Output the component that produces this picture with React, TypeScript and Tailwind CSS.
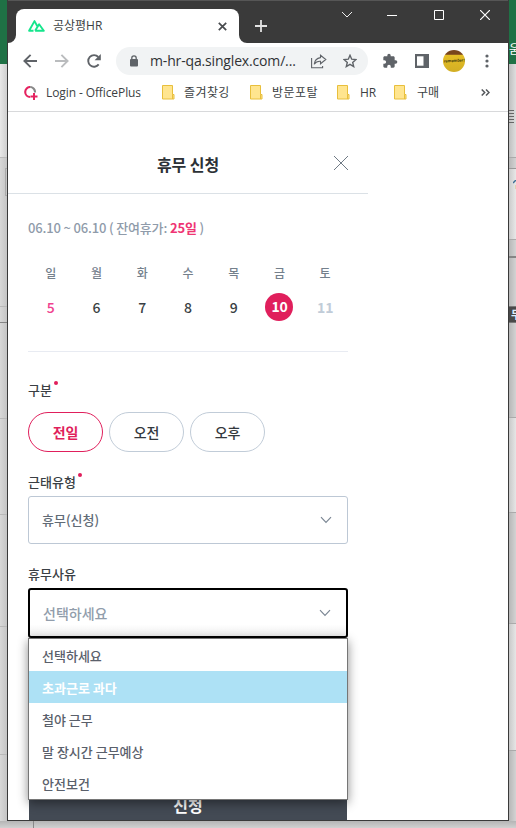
import React from 'react';

const BODY = "font-['Noto_Sans_CJK_KR',sans-serif]";
const UI = "font-['Open_Sans','Noto_Sans_CJK_KR',sans-serif]";

function Folder() {
  return (
    <svg width="13" height="15" viewBox="0 0 13 15" className="shrink-0">
      <path d="M.5.5h10v9h1.5v4.5H.5z" fill="#ffe58f" stroke="#e8bf3c" />
      <path d="M10.5 9.5V14" stroke="#e8bf3c" fill="none" />
    </svg>
  );
}

function Chevron() {
  return (
    <svg width="12" height="8" viewBox="0 0 12 8" fill="none" stroke="#7b8794" strokeWidth="1.2">
      <path d="M1 1.2 6 6.3 11 1.2" />
    </svg>
  );
}

function TitleBar() {
  return (
    <div className="flex h-[43px] border-t border-[#565656] bg-[#3a3a3a] text-white">
      <div className="flex w-2 items-end">
        <svg width="8" height="8"><path d="M8 0v8H0A8 8 0 0 0 8 0" fill="#fff" /></svg>
      </div>
      <div className="mt-2 flex h-[34px] w-[223px] items-center rounded-t-lg bg-white pl-3">
        <svg width="17" height="12" viewBox="0 0 17 12" fill="none" stroke="#15e58c" strokeWidth="1.9" strokeLinejoin="round">
          <path d="M5.5 10.8H1.1L6.5 1.1 10 7.5M7.1 10.8 11.1 4.2 15.8 10.8H7.1" />
        </svg>
        <span className={`${UI} ml-2 w-[160px] whitespace-nowrap text-[12px] leading-[18px] text-[#3c3f43]`}>공상평HR</span>
        <svg className="ml-[5px]" width="9" height="9" viewBox="0 0 9 9" stroke="#484b4e" strokeWidth="1.7"><path d="m.8.8 7.4 7.4m0-7.4L.8 8.2" /></svg>
      </div>
      <div className="flex w-2 items-end">
        <svg width="8" height="8"><path d="M0 0v8h8A8 8 0 0 1 0 0" fill="#fff" /></svg>
      </div>
      <svg className="ml-2 mt-[19px]" width="12" height="12" stroke="#e2e2e2" strokeWidth="1.8"><path d="M6 0v12M0 6h12" /></svg>
      <svg className="ml-[74px] mt-[10px]" width="12" height="8" fill="none" stroke="#eee"><path d="m1 1 5 5 5-5" /></svg>
      <svg className="ml-[34px] mt-[14px]" width="10" height="1"><path d="M0 .5h10" stroke="#fff" /></svg>
      <svg className="ml-[37px] mt-[9px]" width="10" height="10"><path d="M.5.5h9v9h-9z" stroke="#fff" fill="none" /></svg>
      <svg className="ml-9 mt-[9px]" width="10" height="10" stroke="#fff" strokeWidth="1.2"><path d="m0 0 10 10M10 0 0 10" /></svg>
    </div>
  );
}

function Toolbar() {
  return (
    <div className="flex h-9 items-center pl-[15px]">
      <svg width="14" height="14" viewBox="0 0 14 14" fill="none" stroke="#5f6368" strokeWidth="1.9"><path d="M14 7H1.6M7.6.8 1.4 7l6.2 6.2" /></svg>
      <svg className="ml-[18px]" width="14" height="14" viewBox="0 0 14 14" fill="none" stroke="#babcbe" strokeWidth="1.9"><path d="M0 7h12.4M6.4.8 12.6 7l-6.2 6.2" /></svg>
      <svg className="ml-[18px]" width="14" height="14" viewBox="0 0 14 14" fill="none"><path d="M11.7 10.4A5.8 5.8 0 1 1 11.3 3" stroke="#5f6368" strokeWidth="1.9" /><path d="M13.8 0v6.2H7.6z" fill="#5f6368" /></svg>
      <div className="ml-[15px] flex h-7 w-[252px] items-center rounded-full bg-[#f1f3f4] pl-[14px]">
        <svg width="8" height="12" viewBox="0 0 8 12"><rect y="4" width="8" height="7.5" rx="1" fill="#5f6368" /><path d="M1.8 5V3a2.2 2.2 0 0 1 4.4 0v2" fill="none" stroke="#5f6368" strokeWidth="1.3" /></svg>
        <span className={`${UI} ml-3 w-[148px] whitespace-nowrap text-[14px] leading-5 tracking-[-0.16px] text-[#303235]`}>m-hr-qa.singlex.com/...</span>
        <svg className="ml-[13px]" width="16" height="15" viewBox="0 0 16 15" fill="none" stroke="#5f6368" strokeWidth="1.1"><path d="M.6 4v9.8h11V12M9.5 1.2 14.8 5.5 9.5 9.8V7.3C6.3 7.1 4.6 8.2 3.2 10.3c.4-3.7 2.6-6.2 6.3-6.7z" /></svg>
        <svg className="ml-4" width="14" height="14" viewBox="0 0 14 14" fill="none" stroke="#5f6368" strokeWidth="1.4"><path d="m7 1.3 1.7 3.9 4.2.4-3.2 2.8 1 4.2L7 10.4l-3.7 2.2 1-4.2L1.1 5.6l4.2-.4z" /></svg>
      </div>
      <svg className="ml-[14px]" width="16" height="16" viewBox="0 0 24 24" fill="#5f6368"><path d="M20.5 11H19V7c0-1.1-.9-2-2-2h-4V3.5a2.5 2.5 0 0 0-5 0V5H4c-1.1 0-2 .9-2 2v3.8h1.5a2.7 2.7 0 0 1 0 5.4H2V20c0 1.1.9 2 2 2h3.8v-1.5a2.7 2.7 0 0 1 5.4 0V22H17c1.1 0 2-.9 2-2v-4h1.5a2.5 2.5 0 0 0 0-5" /></svg>
      <svg className="ml-[17px]" width="14" height="14"><path d="M0 0h14v14H0z" fill="#5f6368" /><path d="M2 2.3h6.5v9.4H2z" fill="#fff" /></svg>
      <div className="ml-[14px] flex h-[22px] w-[22px] items-center justify-center rounded-full bg-gradient-to-b from-[#79451c] from-20% via-[#e5be25] via-22% to-[#d2ae24] to-100%">
        <span className="-rotate-3 whitespace-nowrap font-['Liberation_Sans',sans-serif] text-[4px] font-bold italic leading-none text-[#38300c]">remember!</span>
      </div>
      <svg className="ml-[20px]" width="4" height="14" fill="#5f6368"><circle cx="2" cy="2" r="1.6" /><circle cx="2" cy="7" r="1.6" /><circle cx="2" cy="12" r="1.6" /></svg>
    </div>
  );
}

function Bookmarks() {
  const t = `${UI} whitespace-nowrap text-[12px] leading-[18px] text-[#3c3f43]`;
  return (
    <div className="flex h-[33px] items-center border-b border-[#d8d9db] pl-4 pb-[5px]">
      <svg width="14" height="14" viewBox="0 0 14 14" fill="none" strokeWidth="2.1"><path d="M6.2 1A5 5 0 0 0 6.2 11" stroke="#e52360" /><path d="M6.2 1A5 5 0 0 1 11 6.5" stroke="#888" /><path d="M10 7v7M6.5 10.5h7" stroke="#e52360" strokeWidth="2" /></svg>
      <span className={`${t} ml-2 w-[100px] tracking-[-0.1px]`}>Login - OfficePlus</span>
      <div className="ml-4"><Folder /></div>
      <span className={`${t} ml-[9px] w-12 tracking-[0.4px]`}>즐겨찾깅</span>
      <div className="ml-[18px]"><Folder /></div>
      <span className={`${t} ml-[9px] w-12 tracking-[0.5px]`}>방문포탈</span>
      <div className="ml-[17px]"><Folder /></div>
      <span className={`${t} ml-[10px] w-[17px]`}>HR</span>
      <div className="ml-[17px]"><Folder /></div>
      <span className={`${t} ml-[10px] w-6`}>구매</span>
      <svg className="ml-[40px]" width="9" height="7" fill="none" stroke="#55585c" strokeWidth="1.5"><path d="m.7.5 3 3-3 3M5 .5l3 3-3 3" /></svg>
    </div>
  );
}

function Label({ text, required }: { text: string; required?: boolean }) {
  return (
    <div className="flex h-5 items-start text-[13px] font-medium leading-5 text-[#3a3f44]">
      <span className="tracking-[0.05px]">{text}</span>
      {required && <i className="ml-[2px] mt-[1px] h-1 w-1 rounded-full bg-[#e01f5c]" />}
    </div>
  );
}

const week = [
  ['일', '5'], ['월', '6'], ['화', '7'], ['수', '8'], ['목', '9'], ['금', '10'], ['토', '11'],
];
const dayTone: Record<string, string> = {
  '5': 'font-medium text-[#f0418f]',
  '10': 'rounded-full bg-[#e01f5c] font-bold text-white pb-[2px] tracking-[-0.4px]',
  '11': 'font-bold text-[#c1ccd8]',
};

function PageContent() {
  return (
    <div className={`${BODY} h-[708px] w-[360px] overflow-hidden`}>
      <div className="flex h-[82px] items-center justify-end border-b border-[#dbe1e6] pr-5">
        <h1 className="mr-[115px] mt-[23px] whitespace-nowrap text-[16px] font-bold leading-6 tracking-[-0.1px] text-[#2c3136]">휴무 신청</h1>
        <svg className="mt-[21px]" width="14" height="14" stroke="#6f7a85" strokeWidth="1"><path d="m0 0 14 14M14 0 0 14" /></svg>
      </div>
      <div className="flex flex-col px-5">
        <p className="mt-6 h-5 whitespace-nowrap text-[13px] font-medium leading-5 tracking-[-0.16px] text-[#8f9baa]">
          06.10 ~ 06.10 ( 잔여휴가: <b className="text-[#ef3574]">25일</b> )
        </p>
        <div className="mt-[25px] grid grid-cols-7">
          {week.map(([name, day]) => (
            <div key={day} className="flex flex-col items-center">
              <span className="h-5 text-[12px] font-medium leading-5 text-[#74808c]">{name}</span>
              <span className={`mt-[10px] flex h-7 w-7 items-center justify-center text-[14px] leading-5 ${dayTone[day] ?? 'font-medium text-[#3a3f44]'}`}>{day}</span>
            </div>
          ))}
        </div>
        <div className="mt-[30px] h-px bg-[#e8ebf2]" />
        <div className="mt-7"><Label text="구분" required /></div>
        <div className="mt-3 flex gap-[6px] text-[14px] font-medium leading-5 tracking-[-0.2px] text-[#34393e]">
          <div className="flex h-10 w-[75px] items-center justify-center rounded-full border border-[#e01f5c] font-bold text-[#e01f5c]">전일</div>
          <div className="flex h-10 w-[75px] items-center justify-center rounded-full border border-[#c1ccd8]">오전</div>
          <div className="flex h-10 w-[75px] items-center justify-center rounded-full border border-[#c1ccd8]">오후</div>
        </div>
        <div className="mt-5"><Label text="근태유형" required /></div>
        <div className="mt-1 flex h-12 items-center justify-between rounded-[3px] border border-[#bdc8d5] pl-[13px] pr-[15px] text-[13px] font-medium text-[#616b76]">
          <span>휴무(신청)</span><Chevron />
        </div>
        <div className="mt-5"><Label text="휴무사유" /></div>
        <div className="mt-1 flex h-[50px] items-center justify-between rounded-[3px] border-2 border-black bg-gradient-to-b from-white from-75% to-[#eee] pl-[13px] pr-[15px] text-[14px] font-medium text-[#919dab]">
          <span>선택하세요</span><Chevron />
        </div>
        <div className="z-10 h-[162px] border border-[#767676] bg-white text-[13px] font-medium text-[#5a606b] shadow-[0_3px_10px_rgba(0,0,0,0.45)]">
          {['선택하세요', '초과근로 과다', '철야 근무', '말 장시간 근무예상', '안전보건'].map((item, i) => (
            <div key={item} className={`flex h-8 items-center pl-[13px] pt-[2px] ${i === 1 ? 'bg-[#ade1f5] font-bold text-white' : ''}`}>{item}</div>
          ))}
        </div>
        <div className="mx-px h-5 bg-[#434a54] text-center text-[16px] font-bold leading-[11px] text-white">신청</div>
      </div>
    </div>
  );
}

function LeftBackdrop() {
  return (
    <div className="flex h-[821px] w-[7px] shrink-0 flex-col bg-gradient-to-r from-[#d8d8d8] to-[#c5c5c5]">
      <div className="h-16 bg-[#1f7145]" />
      <div className="h-[94px] border-b border-[#bbb] bg-gradient-to-r from-[#e8e8e8] to-[#cfcfcf]" />
      <div className="mt-[10px] ml-[5px] h-7 w-[2px] border border-r-0 border-[#aaa]" />
      <div className="h-[111px] border-b border-[#b9b9b9]" />
      <div className="h-4 border-b border-[#858585]" />
      <div className="h-24 border-b border-[#b9b9b9]" />
      <div className="h-24 border-b border-[#b9b9b9]" />
      <div className="h-28 border-b border-[#b9b9b9]" />
      <div className="h-32 border-b border-[#b9b9b9]" />
    </div>
  );
}

function RightBackdrop() {
  return (
    <div className="flex h-[821px] w-[7px] shrink-0 flex-col overflow-hidden bg-gradient-to-r from-[#b7b7b7] to-[#d3d3d3]">
      <div className={`${BODY} h-16 bg-[#1f7145] pt-10 text-[12px] leading-[18px] text-white`}>움</div>
      <div className="h-[94px] border-b border-[#aaa] bg-gradient-to-r from-[#bfbfbf] to-[#dedede] pt-[46px]">
        {[0, 1, 2, 3, 4].map((n) => <div key={n} className="mb-[2px] h-px w-[5px] bg-[#666]" />)}
      </div>
      <div className="h-[11px] border-b border-[#999]" />
      <div className="h-[71px] border-b border-[#aaa] bg-gradient-to-r from-[#cbcbcb] to-[#e8e8e8] pl-[4px] pt-[11px]">
        <svg width="4" height="10"><path d="M0 3 3 0" stroke="#3d6d93" strokeWidth="1.5" /><path d="M3 5v4" stroke="#e4ba76" /></svg>
      </div>
      <div className="h-[18px] border-b-2 border-[#858585]" />
      <div className={`${BODY} mt-12 h-[17px] border-y border-[#777] bg-[#494949] pl-[2px] text-[11px] font-bold leading-[15px] text-[#dceeff]`}>무</div>
      <div className="h-[95px] border-b border-[#aaa]" />
      <div className="h-[95px] border-b border-[#aaa] bg-gradient-to-r from-[#c9c9c9] to-[#e6e6e6]" />
      <div className="h-[111px] border-b border-[#aaa]" />
      <div className="h-[127px] border-b border-[#aaa] bg-gradient-to-r from-[#c9c9c9] to-[#e6e6e6]" />
    </div>
  );
}

export default function App() {
  return (
    <main className="h-[828px] w-[516px] overflow-hidden">
      <div className="flex h-[821px]">
        <LeftBackdrop />
        <section className="h-[821px] w-[502px] shrink-0 border-x border-b border-[#3a3a3a] bg-white">
          <TitleBar />
          <Toolbar />
          <Bookmarks />
          <PageContent />
        </section>
        <RightBackdrop />
      </div>
      <div className="h-[7px] bg-gradient-to-b from-[#b5b5b5] to-[#d1d1d1] pl-[33px]"><div className="h-full w-px bg-[#888]" /></div>
    </main>
  );
}
